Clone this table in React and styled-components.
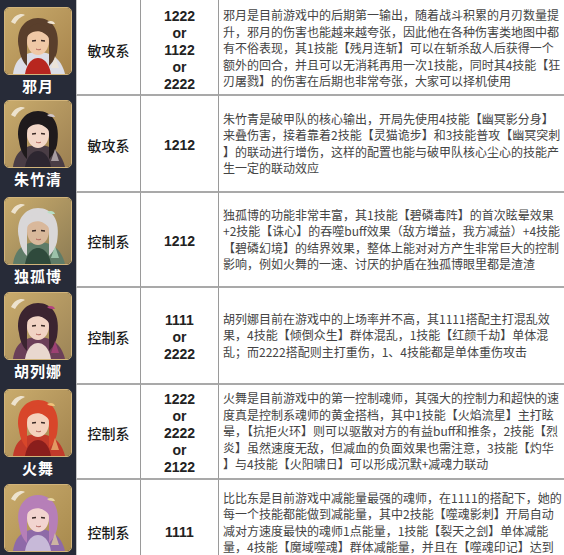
import React from "react";
import styled, { createGlobalStyle } from "styled-components";

const GlobalStyle = createGlobalStyle`
    html, body {
        margin: 0;
        padding: 0;
        background: #ffffff;
        overflow: hidden;
    }
    body {
        font-family: "Noto Sans CJK SC", "Noto Sans", sans-serif;
    }
`;

const heroes = [
    {
        name: "邪月",
        type: "敏攻系",
        builds: ["1222", "1122", "2222"],
        height: 93,
        look: { bg: "#a7844c", hair: "#5a3f2c", skin: "#efc8a6", cloth: "#b8261f", coat: "#dcdde6", accent: "#f1e5d2" },
        lines: [
            "邪月是目前游戏中的后期第一输出，随着战斗积累的月刃数量提",
            "升，邪月的伤害也能越来越夸张，因此他在各种伤害类地图中都",
            "有不俗表现，其1技能【残月连斩】可以在斩杀敌人后获得一个",
            "额外的回合，并且可以无消耗再用一次1技能，同时其4技能【狂",
            "刃屠戮】的伤害在后期也非常夸张，大家可以择机使用",
        ],
    },
    {
        name: "朱竹清",
        type: "敏攻系",
        builds: ["1212"],
        height: 97,
        look: { bg: "#9c8052", hair: "#1f1a1c", skin: "#f3d7c8", cloth: "#2d2630", coat: "#4a3d45", accent: "#cfc5c8" },
        lines: [
            "朱竹青是破甲队的核心输出，开局先使用4技能【幽冥影分身】",
            "来叠伤害，接着靠着2技能【灵猫诡步】和3技能普攻【幽冥突刺",
            "】的联动进行增伤，这样的配置也能与破甲队核心尘心的技能产",
            "生一定的联动效应",
        ],
    },
    {
        name: "独孤博",
        type: "控制系",
        builds: ["1212"],
        height: 95,
        look: { bg: "#8e7d55", hair: "#d9d7d8", skin: "#d9b89b", cloth: "#2f4a3c", coat: "#5f7c68", accent: "#b7e0c6" },
        lines: [
            "独孤博的功能非常丰富，其1技能【碧磷毒阵】的首次眩晕效果",
            "+2技能【诛心】的吞噬buff效果（敌方增益，我方减益）+4技能",
            "【碧磷幻境】的结界效果，整体上能对对方产生非常巨大的控制",
            "影响，例如火舞的一速、讨厌的护盾在独孤博眼里都是渣渣",
        ],
    },
    {
        name: "胡列娜",
        type: "控制系",
        builds: ["1111", "2222"],
        height: 97,
        look: { bg: "#9d8558", hair: "#3b2430", skin: "#f1d3c4", cloth: "#e9d8cf", coat: "#6b3f58", accent: "#b2437f" },
        lines: [
            "胡列娜目前在游戏中的上场率并不高，其1111搭配主打混乱效",
            "果，4技能【倾倒众生】群体混乱，1技能【红颜千劫】单体混",
            "乱；而2222搭配则主打重伤，1、4技能都是单体重伤攻击",
        ],
    },
    {
        name: "火舞",
        type: "控制系",
        builds: ["1222", "2222", "2122"],
        height: 95,
        look: { bg: "#a2844f", hair: "#d8462a", skin: "#f4d2bd", cloth: "#8a1e1c", coat: "#c23a2a", accent: "#f0c27a" },
        lines: [
            "火舞是目前游戏中的第一控制魂师，其强大的控制力和超快的速",
            "度真是控制系魂师的黄金搭档，其中1技能【火焰流星】主打眩",
            "晕，【抗拒火环】则可以驱散对方的有益buff和推条，2技能【烈",
            "炎】虽然速度无敌，但减血的负面效果也需注意，3技能【灼华",
            "】与4技能【火阳啸日】可以形成沉默+减魂力联动",
        ],
    },
    {
        name: "比比东",
        type: "控制系",
        builds: ["1111"],
        height: 104,
        look: { bg: "#a88a4e", hair: "#b67fb8", skin: "#f2d4cf", cloth: "#c7b9d8", coat: "#8e6aa8", accent: "#e7d6a0" },
        lines: [
            "比比东是目前游戏中减能量最强的魂师，在1111的搭配下，她的",
            "每一个技能都能做到减能量，其中2技能【噬魂影刺】开局自动",
            "减对方速度最快的魂师1点能量，1技能【裂天之刽】单体减能",
            "量，4技能【魔域噬魂】群体减能量，并且在【噬魂印记】达到",
            "一定层数后还能额外减少对方全体的能量",
        ],
    },
];

function Portrait({ look }) {
    const gid = "bg" + look.hair.slice(1);
    return (
        <svg width="66" height="66" viewBox="0 0 66 66">
            <defs>
                <linearGradient id={gid} x1="0" y1="0" x2="1" y2="1">
                    <stop offset="0" stopColor="#c9ab6c" />
                    <stop offset="1" stopColor={look.bg} />
                </linearGradient>
            </defs>
            <rect x="0" y="0" width="66" height="66" fill={`url(#${gid})`} />
            <path d="M6 14 C10 6 17 5 20 7 C15 9 12 12 10 16 Z" fill="#f4ede0" opacity="0.85" />
            <path d="M8 66 C10 50 20 44 33 44 C46 44 56 50 60 66 Z" fill={look.coat} />
            <path d="M20 66 C22 54 28 50 33 50 C38 50 44 54 46 66 Z" fill={look.cloth} />
            <path d="M14 40 C10 22 20 10 33 10 C47 10 56 22 52 44 C50 52 46 56 44 58 L44 34 L22 34 L22 58 C18 54 15 48 14 40 Z" fill={look.hair} />
            <ellipse cx="33" cy="33" rx="11" ry="14" fill={look.skin} />
            <path d="M21 30 C22 18 30 15 35 16 C42 17 46 23 45 31 C40 24 34 22 28 24 C25 25 23 27 21 30 Z" fill={look.hair} />
            <path d="M27 33 L31 32.5" stroke="#3a2a26" strokeWidth="1.3" />
            <path d="M36 32.5 L40 33" stroke="#3a2a26" strokeWidth="1.3" />
            <path d="M31 41 C33 42 35 42 36 41" stroke="#b0605a" strokeWidth="1" fill="none" />
            <path d="M42 14 C46 12 49 13 50 16 C47 16 44 16 42 14 Z" fill={look.accent} />
            <path d="M46 60 L50 48 L54 60 Z" fill={look.accent} opacity="0.7" />
        </svg>
    );
}

function App() {
    return (
        <>
            <GlobalStyle />
            <Table>
                <Row $height={3}>
                    <HeroCell />
                    <TypeCell />
                    <BuildCell />
                    <DescCell />
                </Row>
                {heroes.map((hero) => (
                    <Row key={hero.name} $height={hero.height}>
                        <HeroCell>
                            <AvatarFrame>
                                <Portrait look={hero.look} />
                            </AvatarFrame>
                            <HeroName>{hero.name}</HeroName>
                        </HeroCell>
                        <TypeCell>{hero.type}</TypeCell>
                        <BuildCell>
                            {hero.builds.map((b, i) => (
                                <React.Fragment key={b}>
                                    {i > 0 && <span>or</span>}
                                    <span>{b}</span>
                                </React.Fragment>
                            ))}
                        </BuildCell>
                        <DescCell>
                            <DescText>
                                {hero.lines.map((line) => (
                                    <DescLine key={line}>{line}</DescLine>
                                ))}
                            </DescText>
                        </DescCell>
                    </Row>
                ))}
            </Table>
        </>
    );
}

export default App;

const Table = styled.div`
    width: 564px;
    display: flex;
    flex-direction: column;
`;

const Row = styled.div`
    display: grid;
    grid-template-columns: 76px 65px 78px 1fr;
    height: ${(p) => p.$height}px;
    flex-shrink: 0;
`;

const HeroCell = styled.div`
    background-color: #272b38;
    display: flex;
    flex-direction: column;
    align-items: center;
    padding-top: 4px;
    box-sizing: border-box;
    overflow: hidden;
`;

const AvatarFrame = styled.div`
    width: 66px;
    height: 66px;
    border: 1px solid #d2b47a;
    border-radius: 5px;
    overflow: hidden;
    flex-shrink: 0;

    svg {
        display: block;
    }
`;

const HeroName = styled.div`
    color: #ffffff;
    font-size: 15px;
    font-weight: 700;
    letter-spacing: 1px;
    line-height: 20px;
    margin-top: 1px;
`;

const Cell = styled.div`
    border-bottom: 2px solid #a9a9a9;
    box-sizing: border-box;
    display: flex;
    align-items: center;
    background: #ffffff;
`;

const TypeCell = styled(Cell)`
    border-left: 1px solid #c4c4c4;
    border-right: 1px solid #9a9a9a;
    justify-content: center;
    padding-top: 2px;
    font-size: 14px;
    font-weight: 500;
    color: #1a1a1a;
`;

const BuildCell = styled(Cell)`
    border-right: 1px solid #9a9a9a;
    flex-direction: column;
    justify-content: center;
    padding-top: 3px;
    font-family: "Liberation Sans", Arial, sans-serif;
    font-size: 14px;
    font-weight: 700;
    line-height: 17px;
    color: #222222;
`;

const DescCell = styled(Cell)`
    padding-left: 4px;
    overflow: hidden;
`;

const DescText = styled.div`
    display: flex;
    flex-direction: column;
    font-size: 12px;
    line-height: 16.5px;
    color: #444444;
`;

const DescLine = styled.div`
    white-space: nowrap;
`;
